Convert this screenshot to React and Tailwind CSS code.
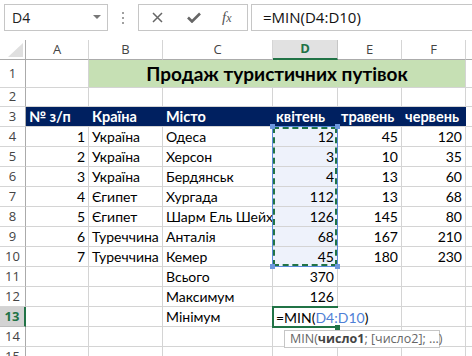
import React from "react";

const W = [26, 63, 74, 110, 65, 64, 64];
const GRID = "border-[#d4d4d4]";

function RowHead({ n, h, active }) {
  return (
    <div
      className={`shrink-0 flex items-center justify-center font-['Open_Sans'] text-[13px] ${
        active
          ? "bg-[#d3d3d3] text-[#217346] font-bold border-r-2 border-r-[#217346] border-b border-b-[#bcbcbc]"
          : "bg-white text-[#444] border-r border-r-[#ababab] border-b border-b-[#d5d5d5]"
      }`}
      style={{ width: W[0], height: h }}
    >
      {n}
    </div>
  );
}

function Cell({ w, children, right, cls = "", noGrid }) {
  return (
    <div
      className={`shrink-0 h-full flex items-center overflow-hidden whitespace-nowrap px-[3px] leading-[19px] ${
        right ? "justify-end" : "justify-start"
      } ${noGrid ? "" : `border-r border-b ${GRID}`} ${cls}`}
      style={{ width: w }}
    >
      {children}
    </div>
  );
}

function DataRow({ n, h = 20, cells = [], active }) {
  return (
    <div className="flex" style={{ height: h }}>
      <RowHead n={n} h={h} active={active} />
      <Cell w={W[1]} right>{cells[0]}</Cell>
      <Cell w={W[2]}>{cells[1]}</Cell>
      <Cell w={W[3]}>{cells[2]}</Cell>
      <Cell w={W[4]} right cls={cells.length && n >= 4 && n <= 10 ? "bg-[#eef2fb]" : ""}>{cells[3]}</Cell>
      <Cell w={W[5]} right>{cells[4]}</Cell>
      <Cell w={W[6]} right>{cells[5]}</Cell>
      <div className={`flex-1 border-b ${GRID}`} />
    </div>
  );
}

const data = [
  [4, "1", "Україна", "Одеса", "12", "45", "120"],
  [5, "2", "Україна", "Херсон", "3", "10", "35"],
  [6, "3", "Україна", "Бердянськ", "4", "13", "60"],
  [7, "4", "Єгипет", "Хургада", "112", "13", "68"],
  [8, "5", "Єгипет", "Шарм Ель Шейх", "126", "145", "80"],
  [9, "6", "Туреччина", "Анталія", "68", "167", "210"],
  [10, "7", "Туреччина", "Кемер", "45", "180", "230"],
];

export default function App() {
  const cols = ["A", "B", "C", "D", "E", "F"];
  return (
    <div className="w-[472px] h-[356px] overflow-hidden bg-white relative">
      {/* toolbar */}
      <div className="h-[40px] flex items-start pt-[4px] pl-[4px] font-['Open_Sans']">
        <div className="w-[104px] h-[27px] border border-[#c6c6c6] flex items-center justify-between pl-[7px] pr-[6px] text-[14px] text-[#222]">
          <span>D4</span>
          <svg width="8" height="5" viewBox="0 0 8 5">
            <path d="M0 0 L8 0 L4 4 Z" fill="#777" />
          </svg>
        </div>
        <div className="w-[30px] h-[27px] flex flex-col items-center justify-center gap-[3px]">
          <div className="w-[2px] h-[2px] bg-[#a0a0a0]" />
          <div className="w-[2px] h-[2px] bg-[#a0a0a0]" />
          <div className="w-[2px] h-[2px] bg-[#a0a0a0]" />
        </div>
        <div className="w-[110px] h-[27px] border border-[#c6c6c6] flex items-center pl-[13px]">
          <svg width="11" height="11" viewBox="0 0 11 11">
            <path d="M1 1 L10 10 M10 1 L1 10" stroke="#666" strokeWidth="1.5" />
          </svg>
          <svg className="ml-[24px]" width="14" height="11" viewBox="0 0 14 11">
            <path d="M1 5.5 L5 9.5 L13 1.5" stroke="#666" strokeWidth="2.6" fill="none" />
          </svg>
          <span className="ml-[21px] font-['Liberation_Serif'] italic text-[15px] text-[#555] leading-none">
            f<span className="text-[12px]">x</span>
          </span>
        </div>
        <div className="ml-[3px] flex-1 h-[27px] border border-r-0 border-[#c6c6c6] flex items-center pl-[11px] text-[15px] text-[#111]">
          =MIN(D4:D10)
        </div>
      </div>

      {/* grid */}
      <div className="relative font-['Lato'] text-[14px] text-black">
        {/* column header */}
        <div className="flex h-[20px] font-['Open_Sans'] text-[13px] text-[#444]">
          <div className="shrink-0 relative border-r border-b border-[#ababab] bg-white" style={{ width: W[0] }}>
            <svg className="absolute right-[2px] bottom-[2px]" width="15" height="14" viewBox="0 0 15 14">
              <path d="M15 0 L15 14 L0 14 Z" fill="#dfdfdf" />
            </svg>
          </div>
          {cols.map((c, i) =>
            c === "D" ? (
              <div
                key={c}
                className="shrink-0 flex items-center justify-center bg-[#e1e1e1] text-[#217346] font-bold border-r border-r-[#c6c6c6] border-b-2 border-b-[#217346]"
                style={{ width: W[i + 1] }}
              >
                {c}
              </div>
            ) : (
              <div
                key={c}
                className="shrink-0 flex items-center justify-center border-r border-r-[#d5d5d5] border-b border-b-[#ababab]"
                style={{ width: W[i + 1] }}
              >
                {c}
              </div>
            )
          )}
          <div className="flex-1 border-b border-b-[#ababab]" />
        </div>

        {/* row 1 */}
        <div className="flex h-[28px]">
          <RowHead n={1} h={28} />
          <Cell w={W[1]} />
          <div
            className="shrink-0 h-full flex items-center justify-center bg-[#c6e0b4] border-b border-r border-[#d4d4d4] font-bold text-[19px] pt-[2px]"
            style={{ width: W[2] + W[3] + W[4] + W[5] + W[6] }}
          >
            Продаж туристичних путівок
          </div>
          <div className={`flex-1 border-b ${GRID}`} />
        </div>

        {/* row 2 */}
        <DataRow n={2} h={19} />

        {/* row 3 */}
        <div className="flex h-[20px]">
          <RowHead n={3} h={20} />
          <div className="flex bg-[#002060] text-white font-bold text-[14.5px] border-b border-[#d4d4d4]">
            <Cell w={W[1]} noGrid>№ з/п</Cell>
            <Cell w={W[2]} noGrid>Країна</Cell>
            <Cell w={W[3]} noGrid>Місто</Cell>
            <Cell w={W[4]} noGrid>квітень</Cell>
            <Cell w={W[5]} noGrid>травень</Cell>
            <Cell w={W[6]} noGrid>червень</Cell>
          </div>
          <div className={`flex-1 border-b ${GRID}`} />
        </div>

        {data.map(([n, ...c]) => (
          <DataRow key={n} n={n} cells={c} />
        ))}
        <DataRow n={11} cells={["", "", "Всього", "370", "", ""]} />
        <DataRow n={12} cells={["", "", "Максимум", "126", "", ""]} />
        <DataRow n={13} active cells={["", "", "Мінімум", "", "", ""]} />
        <DataRow n={14} />
        <DataRow n={15} />

        {/* referenced range D4:D10 */}
        <div className="absolute left-[272px] top-[86px] w-[66px] h-[141px] border border-[#5b8bd9]">
          <div className="w-full h-full border-2 border-dashed border-[#217346]" />
          <div className="absolute left-[-3px] top-[-3px] w-[5px] h-[5px] bg-[#6d97de]" />
          <div className="absolute right-[-3px] top-[-3px] w-[5px] h-[5px] bg-[#6d97de]" />
          <div className="absolute left-[-3px] bottom-[-3px] w-[5px] h-[5px] bg-[#6d97de]" />
          <div className="absolute right-[-3px] bottom-[-3px] w-[5px] h-[5px] bg-[#6d97de]" />
        </div>

        {/* active cell D13 */}
        <div className="absolute left-[272px] top-[266px] w-[66px] h-[22px] border-l-2 border-t-2 border-b-2 border-[#217346] bg-white flex items-center pl-[2px] whitespace-nowrap leading-[19px]">
          <span>=MIN(</span>
          <span className="text-[#4f7fd6]">D4:D10</span>
          <span>)</span>
          <div className="absolute right-[-2px] bottom-[-4px] w-[5px] h-[5px] bg-[#217346]" />
        </div>

        {/* tooltip */}
        <div className="absolute left-[284px] top-[290px] w-[156px] h-[18px] border border-[#c6c6c6] bg-white flex items-center pl-[5px] font-['Open_Sans'] text-[12.5px] text-[#666] whitespace-nowrap">
          MIN(<span className="font-bold text-[#444]">число1</span>; [число2]; ...)
        </div>
      </div>
    </div>
  );
}
